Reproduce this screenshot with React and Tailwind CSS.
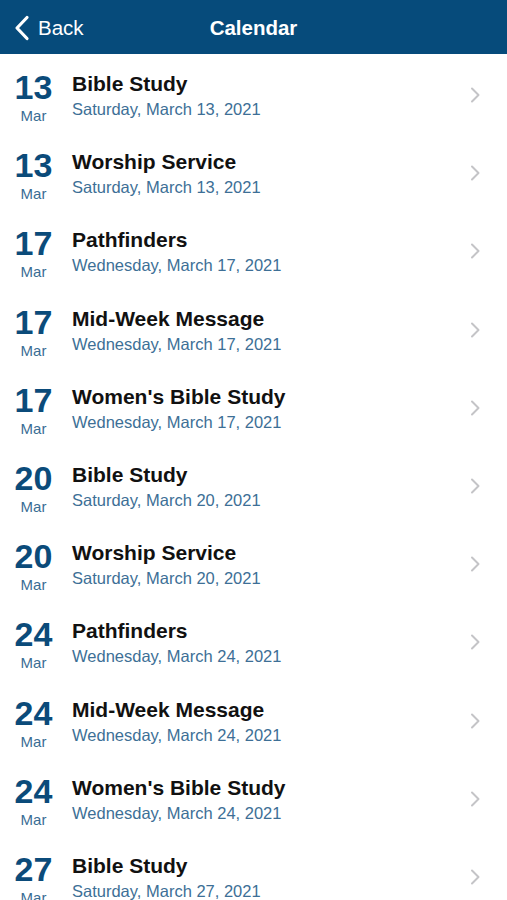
import React from "react";

const events = [
  { day: "13", title: "Bible Study", date: "Saturday, March 13, 2021" },
  { day: "13", title: "Worship Service", date: "Saturday, March 13, 2021" },
  { day: "17", title: "Pathfinders", date: "Wednesday, March 17, 2021" },
  { day: "17", title: "Mid-Week Message", date: "Wednesday, March 17, 2021" },
  { day: "17", title: "Women's Bible Study", date: "Wednesday, March 17, 2021" },
  { day: "20", title: "Bible Study", date: "Saturday, March 20, 2021" },
  { day: "20", title: "Worship Service", date: "Saturday, March 20, 2021" },
  { day: "24", title: "Pathfinders", date: "Wednesday, March 24, 2021" },
  { day: "24", title: "Mid-Week Message", date: "Wednesday, March 24, 2021" },
  { day: "24", title: "Women's Bible Study", date: "Wednesday, March 24, 2021" },
  { day: "27", title: "Bible Study", date: "Saturday, March 27, 2021" },
];

function EventRow({ ev }) {
  return (
    <div className="flex items-start h-[78.2px] shrink-0 relative">
      <div className="w-[67px] flex flex-col items-center pt-[15px]">
        <span className="text-[34px] font-bold leading-[36px] text-[#0b4b7a]">{ev.day}</span>
        <span className="text-[15px] leading-[18px] text-[#3a6d94] mt-[2px]">Mar</span>
      </div>
      <div className="flex-1 flex flex-col pt-[17px] pl-[5px]">
        <span className="text-[21px] font-bold leading-[26px] text-[#111]">{ev.title}</span>
        <span className="text-[16.5px] leading-[20px] text-[#3d6f96] mt-[2px]">{ev.date}</span>
      </div>
      <svg className="absolute right-[27px] top-[33px]" width="10" height="16" viewBox="0 0 10 16" fill="none">
        <path d="M2 1.5 L8.5 8 L2 14.5" stroke="#c4c4c7" strokeWidth="2" strokeLinecap="round" strokeLinejoin="round" />
      </svg>
    </div>
  );
}

export default function App() {
  return (
    <div className="w-[507px] h-[900px] overflow-hidden bg-white flex flex-col" style={{ fontFamily: '"Liberation Sans", Arial, sans-serif' }}>
      <div className="h-[54px] shrink-0 bg-[#064b7b] relative flex items-center justify-center pt-[3px]">
        <div className="absolute left-[14px] top-0 h-full flex items-center gap-[8px] pt-[2px]">
          <svg width="16" height="26" viewBox="0 0 16 26" fill="none">
            <path d="M13 2.5 L3 13 L13 23.5" stroke="#fff" strokeWidth="3.2" strokeLinecap="round" strokeLinejoin="round" />
          </svg>
          <span className="text-white text-[20.5px] leading-none">Back</span>
        </div>
        <span className="text-white text-[20.5px] font-bold leading-none">Calendar</span>
      </div>
      <div className="flex flex-col">
        {events.map((ev, i) => (
          <EventRow key={i} ev={ev} />
        ))}
      </div>
    </div>
  );
}
